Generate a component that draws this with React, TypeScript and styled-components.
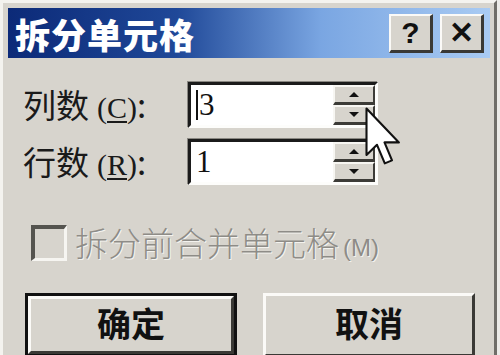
import styled, { createGlobalStyle } from "styled-components";

const Global = createGlobalStyle`
  html, body { margin: 0; padding: 0; background: #ecebe8; }
  body { width: 500px; height: 355px; overflow: hidden; }
`;

const CJK = `"Noto Sans CJK SC", "Noto Sans", sans-serif`;
const FACE = "#d7d4cd";

const Window = styled.div`
  position: relative;
  box-sizing: border-box;
  width: 497px;
  height: 365px;
  background: ${FACE};
  border-left: 3px solid #f4f3ef;
  border-top: 3px solid #f4f3ef;
  border-right: 3px solid #6f6d68;
  padding: 5px 4px 0 5px;
  display: flex;
  flex-direction: column;
  font-family: ${CJK};
`;

const TitleBar = styled.div`
  height: 50px;
  display: flex;
  align-items: center;
  padding: 0 6px 0 7px;
  background: linear-gradient(90deg, #0c2a78 0%, #1f4898 35%, #7aa6e2 65%, #a9cbf3 100%);
`;

const Title = styled.div`
  flex: 1;
  color: #fff;
  font-weight: 900;
  font-size: 35px;
  letter-spacing: 1px;
  line-height: 1;
`;

const CapButton = styled.div<{ $gap?: number }>`
  box-sizing: border-box;
  width: 44px;
  height: 39px;
  margin-left: ${p => p.$gap ?? 0}px;
  background: ${FACE};
  border-top: 2px solid #fbfaf7;
  border-left: 2px solid #fbfaf7;
  border-right: 3px solid #3a3935;
  border-bottom: 3px solid #3a3935;
  display: flex;
  align-items: center;
  justify-content: center;
  color: #111;
  font-family: "Liberation Sans", sans-serif;
  font-weight: 700;
  font-size: 30px;
  line-height: 1;
`;

const Body = styled.div`
  display: flex;
  flex-direction: column;
  padding: 24px 0 0 15px;
`;

const Grid = styled.div`
  display: grid;
  grid-template-columns: 165px 190px;
  row-gap: 11px;
  align-items: center;
`;

const Label = styled.div`
  font-size: 33px;
  color: #1a1a1a;
  line-height: 1;
  white-space: nowrap;
  u { text-decoration-thickness: 2px; text-underline-offset: 3px; }
`;

const Paren = styled.span`
  font-family: "Liberation Serif", serif;
  font-size: 30px;
  margin-left: 8px;
`;

const Spin = styled.div`
  box-sizing: border-box;
  height: 46px;
  display: flex;
  background: #fff;
  border-top: 3px solid #1b1b1b;
  border-left: 3px solid #1b1b1b;
  border-bottom: 3px solid #fdfdfb;
  border-right: 3px solid #fdfdfb;
  box-shadow: -1px -1px 0 #8a8882;
`;

const Value = styled.div`
  flex: 1;
  display: flex;
  align-items: center;
  padding-left: 5px;
  font-family: "Liberation Serif", serif;
  font-size: 31px;
  color: #111;
`;

const Caret = styled.span`
  display: inline-block;
  width: 2px;
  height: 30px;
  background: #111;
  margin-right: 1px;
`;

const Arrows = styled.div`
  width: 42px;
  display: flex;
  flex-direction: column;
`;

const ArrowBtn = styled.div`
  flex: 1;
  box-sizing: border-box;
  background: ${FACE};
  border-top: 2px solid #f7f6f2;
  border-left: 2px solid #f7f6f2;
  border-bottom: 3px solid #3c3b37;
  border-right: 2px solid #3c3b37;
  display: flex;
  align-items: center;
  justify-content: center;
`;

const Tri = styled.div<{ $down?: boolean }>`
  width: 0;
  height: 0;
  border-left: 5px solid transparent;
  border-right: 5px solid transparent;
  ${p => (p.$down ? "border-top: 5px solid #111;" : "border-bottom: 5px solid #111;")}
`;

const CheckRow = styled.div`
  display: flex;
  align-items: center;
  margin-top: 40px;
  margin-left: 8px;
  gap: 8px;
`;

const Box = styled.div`
  box-sizing: border-box;
  width: 36px;
  height: 36px;
  background: ${FACE};
  border-top: 4px solid #55544f;
  border-left: 4px solid #55544f;
  border-bottom: 3px solid #f6f5f1;
  border-right: 3px solid #f6f5f1;
`;

const CheckLabel = styled.div`
  color: #8e8c87;
  font-size: 33px;
  font-weight: 300;
  line-height: 1;
  text-shadow: 1px 1px 0 #f4f3ef;
`;

const Small = styled.span`
  font-family: "Liberation Sans", sans-serif;
  font-size: 24px;
  margin-left: 4px;
`;

const Buttons = styled.div`
  display: flex;
  gap: 26px;
  margin-top: 32px;
  margin-left: 2px;
`;

const Button = styled.div<{ $default?: boolean }>`
  box-sizing: border-box;
  width: 212px;
  height: 64px;
  background: ${FACE};
  border: ${p => (p.$default ? "3px solid #111" : "0")};
  display: flex;
  align-items: center;
  justify-content: center;
`;

const ButtonFace = styled.div`
  box-sizing: border-box;
  width: 100%;
  height: 100%;
  border-top: 3px solid #fbfaf7;
  border-left: 3px solid #fbfaf7;
  border-right: 3px solid #3a3935;
  border-bottom: 3px solid #3a3935;
  display: flex;
  align-items: center;
  justify-content: center;
  font-size: 34px;
  font-weight: 700;
  color: #111;
  padding-bottom: 6px;
`;

const Pointer = styled.svg`
  position: absolute;
  left: 362px;
  top: 104px;
`;

function Spinner({ value, caret }: { value: string; caret?: boolean }) {
  return (
    <Spin>
      <Value>
        {caret && <Caret />}
        {value}
      </Value>
      <Arrows>
        <ArrowBtn><Tri /></ArrowBtn>
        <ArrowBtn><Tri $down /></ArrowBtn>
      </Arrows>
    </Spin>
  );
}

export default function App() {
  return (
    <>
      <Global />
      <Window>
        <TitleBar>
          <Title>拆分单元格</Title>
          <CapButton>?</CapButton>
          <CapButton $gap={7}>✕</CapButton>
        </TitleBar>
        <Body>
          <Grid>
            <Label>列数<Paren>(<u>C</u>)</Paren>:</Label>
            <Spinner value="3" caret />
            <Label>行数<Paren>(<u>R</u>)</Paren>:</Label>
            <Spinner value="1" />
          </Grid>
          <CheckRow>
            <Box />
            <CheckLabel>拆分前合并单元格<Small>(M)</Small></CheckLabel>
          </CheckRow>
          <Buttons>
            <Button $default><ButtonFace>确定</ButtonFace></Button>
            <Button><ButtonFace>取消</ButtonFace></Button>
          </Buttons>
        </Body>
        <Pointer width="36" height="60" viewBox="0 0 12 20">
          <path d="M0.5 0.5 L0.5 16 L4 12.6 L6.6 18.8 L9 17.8 L6.5 11.8 L11.3 11.8 Z" fill="#fff" stroke="#111" strokeWidth="0.7" strokeLinejoin="round" />
        </Pointer>
      </Window>
    </>
  );
}
